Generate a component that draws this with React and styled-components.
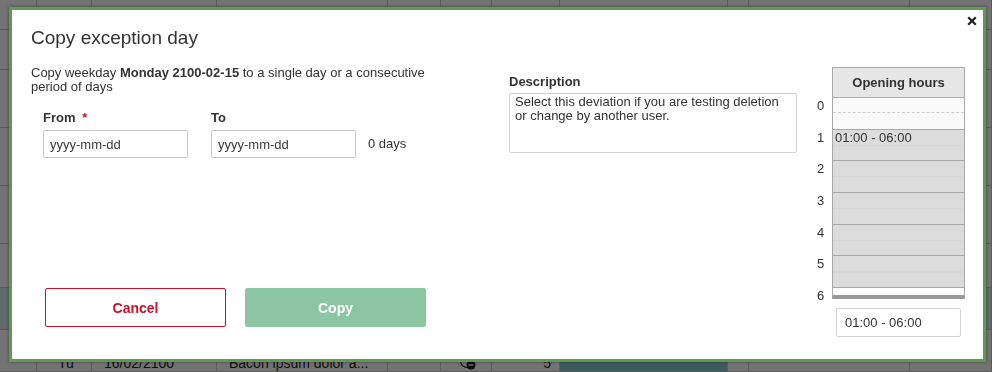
import React from 'react';
import styled, { createGlobalStyle } from 'styled-components';

const GlobalStyle = createGlobalStyle`
  html, body {
    margin: 0;
    padding: 0;
    height: 372px;
    overflow: hidden;
    font-family: "Liberation Sans", Arial, Helvetica, sans-serif;
    color: #333;
  }
  * { box-sizing: border-box; }
`;

const COLS = '37px 55px 125px 171px 53px 51px 68px 168px 13px 169px 1fr';
const ROWS = [
  { h: 30 },
  { h: 40 },
  { h: 58 },
  { h: 58 },
  { h: 58 },
  { h: 44 },
  { h: 42, tint: '#d4edf2' },
  { h: 42, last: true },
];
const HOURS = [0, 1, 2, 3, 4, 5];

const App = () => {
  return (
    <>
      <GlobalStyle />
      <BgTable>
        {ROWS.map((r, i) => (
          <BgRow key={i} $h={r.h} $tint={r.tint}>
            {r.last ? (
              <>
                <BgCell />
                <BgCell $center>Tu</BgCell>
                <BgCell>16/02/2100</BgCell>
                <BgCell>Bacon ipsum dolor a...</BgCell>
                <BgCell />
                <BgCell $center>
                  <svg width="18" height="18" viewBox="0 0 18 18">
                    <circle cx="8" cy="8" r="6.5" fill="none" stroke="#222" strokeWidth="1.2" />
                    <circle cx="12" cy="12" r="4.5" fill="#111" />
                    <rect x="9.5" y="11.3" width="5" height="1.4" fill="#fff" />
                  </svg>
                </BgCell>
                <BgCell $right>5</BgCell>
                <BgCell $fill="#8ac9d6" />
                <BgCell />
                <BgCell />
                <BgCell />
              </>
            ) : (
              Array.from({ length: 11 }).map((_, j) => (
                <BgCell key={j}>{i === 1 && j === 10 ? '0' : ''}</BgCell>
              ))
            )}
          </BgRow>
        ))}
      </BgTable>

      <Overlay>
        <Modal>
          <CloseButton type="button" aria-label="Close">
            <svg width="10" height="10" viewBox="0 0 10 10">
              <path d="M1.2 1.2 L8.8 8.8 M8.8 1.2 L1.2 8.8" stroke="#222" strokeWidth="2.3" />
            </svg>
          </CloseButton>
          <Title>Copy exception day</Title>
          <Body>
            <LeftColumn>
              <Intro>
                Copy weekday <b>Monday 2100-02-15</b> to a single day or a consecutive period of days
              </Intro>
              <Fields>
                <Field $gap={23}>
                  <Label>
                    From <Required>*</Required>
                  </Label>
                  <DateInput placeholder="yyyy-mm-dd" />
                </Field>
                <Field $gap={12}>
                  <Label>To</Label>
                  <DateInput placeholder="yyyy-mm-dd" />
                </Field>
                <Days>0 days</Days>
              </Fields>
              <Actions>
                <Button type="button">Cancel</Button>
                <Button type="button" primary>
                  Copy
                </Button>
              </Actions>
            </LeftColumn>

            <MiddleColumn>
              <Label>Description</Label>
              <Description
                readOnly
                value="Select this deviation if you are testing deletion or change by another user."
              />
            </MiddleColumn>

            <HoursColumn>
              <HoursHeader>Opening hours</HoursHeader>
              {HOURS.map((h) => (
                <HourRow key={h}>
                  <HourNum>{h}</HourNum>
                  <HourCell $open={h > 0}>
                    {h === 0 && <HalfLine />}
                    {h === 1 && <Slot>01:00 - 06:00</Slot>}
                  </HourCell>
                </HourRow>
              ))}
              <HourRow $short>
                <HourNum>6</HourNum>
                <EndCell />
              </HourRow>
              <TimeInput readOnly value="01:00 - 06:00" />
            </HoursColumn>
          </Body>
        </Modal>
      </Overlay>
    </>
  );
};

export default App;

const BgTable = styled.div`
  background: #fff;
  width: 992px;
`;

const BgRow = styled.div`
  display: grid;
  grid-template-columns: ${COLS};
  height: ${(p) => p.$h}px;
  background: ${(p) => p.$tint || '#fff'};
  border-bottom: 1px solid #c8c8c8;
`;

const BgCell = styled.div`
  border-right: 1px solid #c8c8c8;
  background: ${(p) => p.$fill || 'transparent'};
  display: flex;
  align-items: flex-end;
  justify-content: ${(p) => (p.$center ? 'center' : p.$right ? 'flex-end' : 'flex-start')};
  padding: 0 8px 0 12px;
  font-size: 14px;
  line-height: 16px;
  color: #222;
  overflow: hidden;
  white-space: nowrap;
`;

const Overlay = styled.div`
  position: fixed;
  inset: 0;
  background: rgba(0, 0, 0, 0.55);
  padding: 7px 6px 10px 9px;
`;

const Modal = styled.div`
  position: relative;
  width: 977px;
  height: 355px;
  border: 3px solid #5b9d4b;
  background: #fff;
  box-shadow: 0 0 4px rgba(0, 0, 0, 0.4);
  padding: 17px 18px 22px 19px;
  display: flex;
  flex-direction: column;
`;

const CloseButton = styled.button`
  position: absolute;
  top: 6px;
  right: 6px;
  border: none;
  background: none;
  padding: 0;
  width: 10px;
  height: 10px;
  line-height: 0;
  display: block;
  cursor: pointer;

  svg {
    display: block;
  }
`;

const Title = styled.h2`
  margin: 0;
  font-size: 19px;
  line-height: 22px;
  font-weight: 400;
  color: #333;
`;

const Body = styled.div`
  display: flex;
  flex: 1;
  margin-top: 17px;
`;

const LeftColumn = styled.div`
  width: 478px;
  display: flex;
  flex-direction: column;
`;

const Intro = styled.p`
  margin: 0;
  max-width: 420px;
  font-size: 13px;
  line-height: 14px;
  color: #333;

  b {
    font-weight: 700;
  }
`;

const Fields = styled.div`
  display: flex;
  align-items: flex-end;
  margin: 16px 0 0 12px;
`;

const Field = styled.div`
  display: flex;
  flex-direction: column;
  margin-right: ${(p) => p.$gap}px;
`;

const Label = styled.label`
  display: block;
  font-size: 13px;
  line-height: 16px;
  font-weight: 700;
  color: #333;
  margin-bottom: 4px;
`;

const Required = styled.span`
  color: #c8102e;
  margin-left: 3px;
`;

const DateInput = styled.input`
  width: 145px;
  height: 28px;
  border: 1px solid #c6c6c6;
  border-radius: 2px;
  padding: 0 6px;
  font: 13px "Liberation Sans", Arial, sans-serif;
  color: #333;
  outline: none;

  &::placeholder {
    color: #3a3a3a;
    opacity: 1;
  }
`;

const Days = styled.span`
  font-size: 13px;
  line-height: 28px;
  color: #333;
`;

const Actions = styled.div`
  display: flex;
  gap: 19px;
  margin: auto 0 10px 14px;
`;

const Button = styled.button`
  width: 181px;
  height: 39px;
  border-radius: 2px;
  font: 700 14px "Liberation Sans", Arial, sans-serif;
  cursor: pointer;

  ${(props) =>
    props.primary
      ? `
        color: #fff;
        border: 1px solid #8bc5a2;
        background: #8bc5a2;
      `
      : `
        color: #c8102e;
        border: 1px solid #c8102e;
        background: #fff;
      `};
`;

const MiddleColumn = styled.div`
  width: 288px;
  padding-top: 8px;

  label {
    margin-bottom: 3px;
  }
`;

const Description = styled.textarea`
  display: block;
  width: 288px;
  height: 60px;
  border: 1px solid #d2d2d2;
  border-radius: 2px;
  padding: 1px 5px;
  font: 13px/14px "Liberation Sans", Arial, sans-serif;
  color: #333;
  resize: none;
  outline: none;
`;

const HoursColumn = styled.div`
  width: 153px;
  margin-left: 15px;
  display: flex;
  flex-direction: column;
`;

const HoursHeader = styled.div`
  margin: 1px 0 0 20px;
  width: 133px;
  height: 31px;
  border: 1px solid #a9a9a9;
  background: #e6e6e6;
  font-size: 13px;
  font-weight: 700;
  line-height: 29px;
  text-align: center;
  color: #333;
`;

const HourRow = styled.div`
  display: flex;
  height: ${(p) => (p.$short ? '11px' : '31.67px')};
`;

const HourNum = styled.div`
  width: 20px;
  padding: 1px 0 0 5px;
  font-size: 13px;
  line-height: 14px;
  color: #333;
`;

const HourCell = styled.div`
  width: 133px;
  border: 1px solid #a9a9a9;
  border-top: none;
  background: ${(p) =>
    p.$open
      ? 'linear-gradient(#dcdcdc 50%, #d8d8d8 50%, #d8d8d8 calc(50% + 1px), #dcdcdc calc(50% + 1px))'
      : '#fafafa'};
`;

const HalfLine = styled.div`
  height: 50%;
  border-bottom: 1px dashed #d0d0d0;
`;

const Slot = styled.div`
  padding: 1px 2px;
  font-size: 13px;
  line-height: 14px;
  color: #333;
`;

const EndCell = styled.div`
  width: 133px;
  border: 1px solid #a9a9a9;
  border-top: none;
  border-bottom: 4px solid #9a9a9a;
  background: #fff;
`;

const TimeInput = styled.input`
  margin: 9px 0 0 24px;
  width: 125px;
  height: 29px;
  border: 1px solid #d2d2d2;
  border-radius: 2px;
  padding: 0 8px;
  font: 13px "Liberation Sans", Arial, sans-serif;
  color: #333;
  outline: none;
`;
